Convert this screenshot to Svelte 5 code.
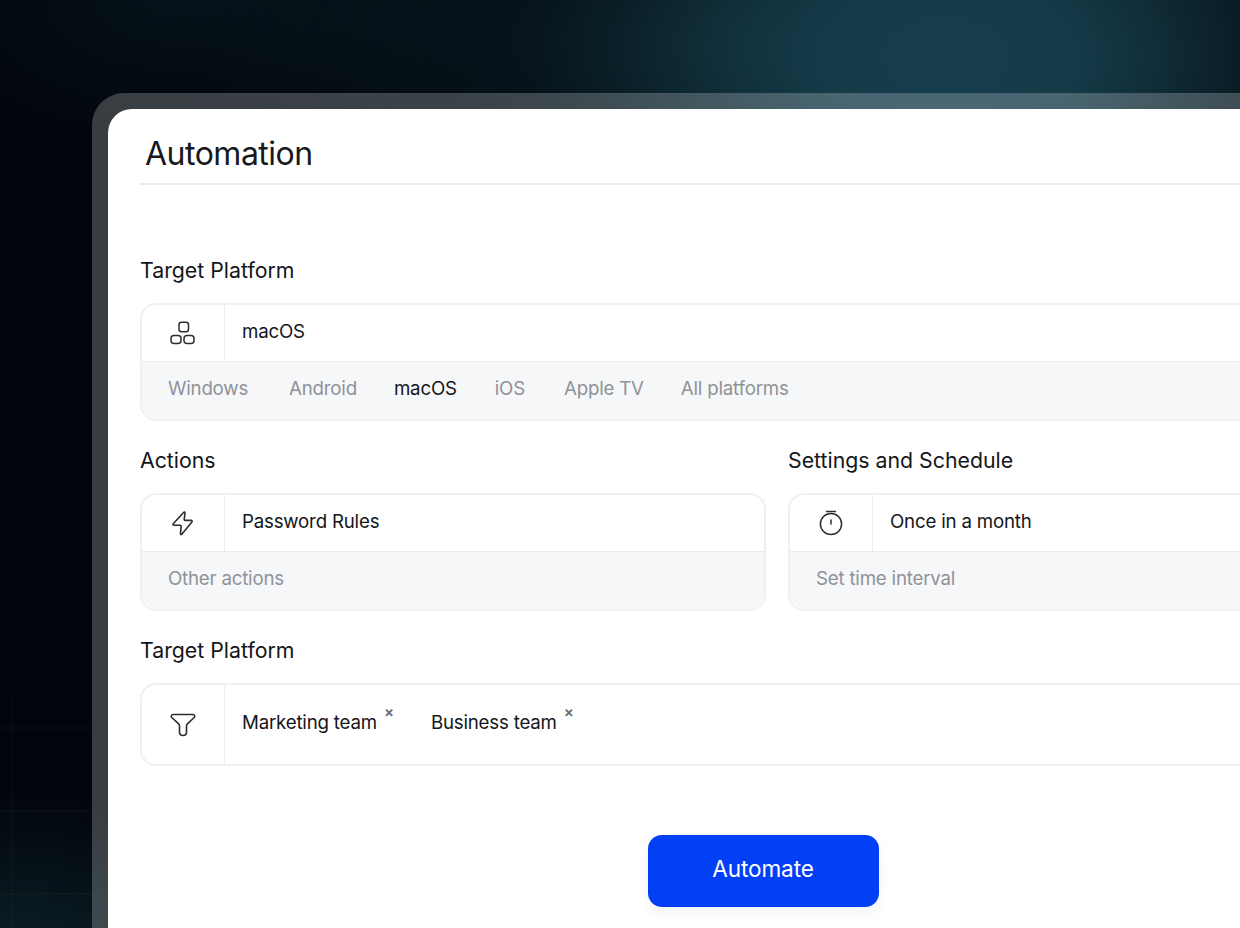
<script>
    const platforms = ['Windows', 'Android', 'macOS', 'iOS', 'Apple TV', 'All platforms'];
    const teams = ['Marketing team', 'Business team'];
    const selected = 'macOS';
</script>

<div class="page">
    <div class="frame">
        <main class="card">
            <h1>Automation</h1>

            <section class="first">
                <h2>Target Platform</h2>
                <div class="box">
                    <div class="row">
                        <div class="icon">
                            <svg width="26" height="26" viewBox="0 0 26 26" fill="none" stroke="#2b2e33" stroke-width="1.5">
                                <rect x="9" y="2.200" width="9.500" height="9.600" rx="2.500" />
                                <rect x="1" y="15.500" width="10" height="8" rx="3" />
                                <rect x="14" y="15.500" width="10" height="8" rx="3" />
                            </svg>
                        </div>
                        <div class="value">macOS</div>
                    </div>
                    <div class="options">
                        {#each platforms as p}
                            <span class:active={p === selected}>{p}</span>
                        {/each}
                    </div>
                </div>
            </section>

            <div class="columns">
                <section>
                    <h2>Actions</h2>
                    <div class="box">
                        <div class="row">
                            <div class="icon">
                                <svg width="26" height="28" viewBox="0 0 26 28" fill="none" stroke="#2b2e33" stroke-width="1.600" stroke-linejoin="round">
                                    <path d="M13.800 3.200c.5-.5 1.300-.1 1.200.6l-.8 6.700c0 .5.300.9.800.9h6.200c.8 0 1.200.9.700 1.500L11.800 25.300c-.5.600-1.400.2-1.300-.6l.6-7.600c0-.5-.3-.9-.8-.9H3.800c-.8 0-1.200-.9-.6-1.500z" />
                                </svg>
                            </div>
                            <div class="value">Password Rules</div>
                        </div>
                        <div class="options"><span>Other actions</span></div>
                    </div>
                </section>
                <section>
                    <h2>Settings and Schedule</h2>
                    <div class="box">
                        <div class="row">
                            <div class="icon">
                                <svg width="26" height="28" viewBox="0 0 26 28" fill="none" stroke="#2b2e33" stroke-width="1.500" stroke-linecap="round">
                                    <circle cx="13" cy="15" r="10.600" />
                                    <path d="M8.500 2.500h9M13 11v4" />
                                </svg>
                            </div>
                            <div class="value">Once in a month</div>
                        </div>
                        <div class="options"><span>Set time interval</span></div>
                    </div>
                </section>
            </div>

            <section>
                <h2>Target Platform</h2>
                <div class="box">
                    <div class="row tall">
                        <div class="icon">
                            <svg width="28" height="26" viewBox="0 0 28 26" fill="none" stroke="#2b2e33" stroke-width="1.600" stroke-linejoin="round">
                                <path d="M4 2.500h20c1.600 0 2.300 1.900 1.200 3L18.600 11.600c-.7.7-1.100 1.400-1.100 2.400v6c0 2.200-1.600 3.500-3.500 3.500s-3.500-1.300-3.500-3.500v-6c0-1-.4-1.700-1.100-2.400L2.800 5.500C1.700 4.400 2.400 2.500 4 2.500z" />
                            </svg>
                        </div>
                        <div class="value tags">
                            {#each teams as t}
                                <span class="tag">{t}<span class="remove">×</span></span>
                            {/each}
                        </div>
                    </div>
                </div>
            </section>

            <div class="actions">
                <button type="button">Automate</button>
            </div>
        </main>
    </div>
</div>

<style>
    :global(body) {
        margin: 0;
        background: #000;
    }

    .page {
        position: relative;
        width: 1240px;
        height: 928px;
        overflow: hidden;
        box-sizing: border-box;
        padding: 93px 0 0 92px;
        font-family: Inter, "Liberation Sans", sans-serif;
        color: #14161a;
        background:
            radial-gradient(ellipse 420px 280px at 950px 60px, rgb(22, 62, 76) 0, rgba(22, 62, 76, 0.92) 30%, rgba(22, 62, 76, 0.55) 55%, rgba(22, 62, 76, 0.18) 80%, rgba(22, 62, 76, 0) 100%),
            radial-gradient(ellipse 560px 220px at 760px 40px, rgba(18, 54, 64, 0.5), rgba(18, 54, 64, 0) 100%),
            radial-gradient(ellipse 320px 160px at 180px 0, rgba(12, 34, 44, 0.45), rgba(12, 34, 44, 0) 100%),
            radial-gradient(ellipse 300px 220px at 0 1000px, rgba(18, 50, 58, 0.75), rgba(18, 50, 58, 0) 100%),
            linear-gradient(90deg, #01040a 0, #03090f 100%);
    }

    /* faint grid behind the frame */
    .page::before {
        content: '';
        position: absolute;
        left: 0;
        bottom: 0;
        width: 92px;
        height: 230px;
        background:
            linear-gradient(90deg, rgba(255, 255, 255, 0.02) 2px, transparent 2px) 11px 0 / 83px 83px,
            linear-gradient(rgba(255, 255, 255, 0.02) 2px, transparent 2px) 0 29px / 83px 83px;
    }

    .frame {
        position: relative;
        width: 1400px;
        height: 1000px;
        box-sizing: border-box;
        padding: 16px 0 0 16px;
        border-radius: 32px 0 0 0;
        background: rgba(255, 255, 255, 0.22);
    }

    .card {
        height: 100%;
        box-sizing: border-box;
        padding: 22px 0 0 32px;
        border-radius: 24px 0 0 0;
        background: #fff;
    }

    h1 {
        margin: 0;
        padding: 0 0 7px 5px;
        height: 45px;
        font-size: 32px;
        line-height: 45px;
        font-weight: 400;
        letter-spacing: -0.5px;
        color: #17191d;
        border-bottom: 2px solid #ececee;
    }

    section {
        display: flex;
        flex-direction: column;
        gap: 20px;
        width: 1244px;
    }

    section.first {
        margin-top: 72px;
    }

    h2 {
        margin: 0;
        font-size: 21.300px;
        line-height: 26px;
        font-weight: 400;
    }

    .columns {
        display: grid;
        grid-template-columns: 626px 596px;
        gap: 22px;
        margin: 26px 0;
        width: 1244px;
    }

    .columns section {
        width: auto;
    }

    .box {
        border: 2px solid #eef0f2;
        border-radius: 16px;
        overflow: hidden;
        background: #fff;
    }

    .row {
        display: flex;
        height: 56px;
    }

    .row.tall {
        height: 79px;
    }

    .icon {
        flex: none;
        width: 82px;
        display: flex;
        align-items: center;
        justify-content: center;
        border-right: 1px solid #eceef0;
    }

    .value {
        display: flex;
        align-items: center;
        padding: 0 0 4px 17px;
        font-size: 18.700px;
        letter-spacing: -0.2px;
    }

    .options {
        display: flex;
        align-items: center;
        gap: 39px;
        box-sizing: border-box;
        height: 58px;
        padding: 0 0 5px 26px;
        font-size: 18.700px;
        letter-spacing: -0.2px;
        color: #8e9297;
        background: #f6f7f9;
        border-top: 1px solid #e9ebee;
    }

    .options span:nth-child(2) {
        margin-left: 2px;
    }

    .options span:nth-child(3) {
        margin-left: -2px;
    }

    .options span:nth-child(4) {
        margin-left: -1px;
    }

    .options span:nth-child(6) {
        margin-left: -2px;
    }

    .options .active {
        color: #14161a;
    }

    .tags {
        gap: 37px;
    }

    .tag {
        position: relative;
        padding-right: 17px;
    }

    .remove {
        position: absolute;
        right: 0;
        top: -7px;
        font-size: 15px;
        line-height: 16px;
        font-weight: 600;
        color: #666b73;
    }

    .actions {
        display: flex;
        justify-content: center;
        width: 1246px;
        margin-top: 69px;
    }

    button {
        width: 231px;
        height: 72px;
        padding: 0 0 5px;
        border: none;
        border-radius: 14px;
        background: #0340f5;
        color: #fff;
        font-family: inherit;
        font-size: 22.600px;
        letter-spacing: -0.1px;
        box-shadow: 0 6px 14px rgba(20, 40, 90, 0.05);
    }
</style>
